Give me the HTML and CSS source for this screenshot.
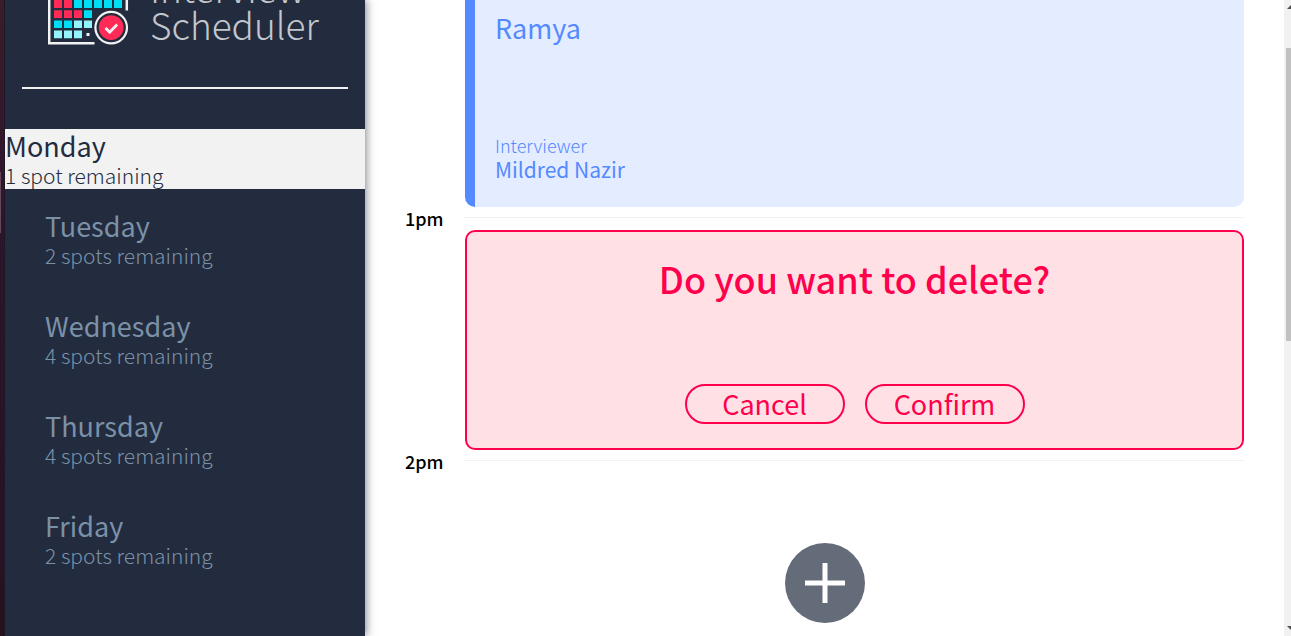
FILE: index.html
```html
<!DOCTYPE html>
<html lang="en">
<head>
<meta charset="utf-8">
<title>Interview Scheduler</title>
<link rel="stylesheet" href="styles.css">
</head>
<body>
<div class="desktop-edge"><div class="desktop-edge__glow"></div></div>
<section class="sidebar">
  <svg class="sidebar__logo" width="276" height="48" viewBox="0 0 276 48" role="img" aria-label="Interview Scheduler">
    <path d="M1.200 0V43.300H46.500M78.800 0V10.500" fill="none" stroke="#f2f2f2" stroke-width="2.500"/>
    <path d="M6 0h8v8H6zM16 0h8v8h-8zM6 10.300h8v7.700H6zM16 10.300h8v7.700h-8zM26 10.300h8v7.700h-8z" fill="#ff2b56"/>
    <path d="M26 0h8v8h-8zM36 0h8v8h-8zM46 0h8v8h-8zM56 0h8v8h-8zM66 0h8v8h-8zM36 10.300h8v7.700h-8zM6 20.400h8v7.700H6zM16 20.400h8v7.700h-8z" fill="#00def5"/>
    <path d="M26 20.400h8v7.700h-8zM36 20.400h8v7.700h-8zM6 30.600h8v7.700H6zM16 30.600h8v7.700h-8zM26 30.600h8v7.700h-8z" fill="#93f4fc"/>
    <path d="M38.500 33h3v3h-3z" fill="#f2f2f2"/>
    <circle cx="63.200" cy="27.600" r="15.800" fill="#222c3e" stroke="#f2f2f2" stroke-width="2.200"/>
    <circle cx="63.200" cy="27.600" r="12.400" fill="#ff2b56"/>
    <path d="M57.500 28l4.200 4.200 7.400-7.600" fill="none" stroke="#f2f2f2" stroke-width="2.800"/>
    <text class="sidebar__wordmark" x="102" y="3">Interview</text>
    <text class="sidebar__wordmark" x="102" y="40">Scheduler</text>
  </svg>
  <hr class="sidebar__separator">
  <nav>
    <ul class="day-list">
      <li><button class="day day--selected"><span class="day__name">Monday</span><span class="day__spots">1 spot remaining</span></button></li>
      <li><button class="day"><span class="day__name">Tuesday</span><span class="day__spots">2 spots remaining</span></button></li>
      <li><button class="day"><span class="day__name">Wednesday</span><span class="day__spots">4 spots remaining</span></button></li>
      <li><button class="day"><span class="day__name">Thursday</span><span class="day__spots">4 spots remaining</span></button></li>
      <li><button class="day"><span class="day__name">Friday</span><span class="day__spots">2 spots remaining</span></button></li>
    </ul>
  </nav>
</section>
<main class="schedule">
  <article class="card card--show">
    <h2 class="card__student">Ramya</h2>
    <div class="card__interviewer">
      <h4 class="card__label">Interviewer</h4>
      <h3 class="card__name">Mildred Nazir</h3>
    </div>
  </article>
  <header class="time"><h4 class="time__text">1pm</h4><hr class="time__line"></header>
  <article class="card card--confirm">
    <h1 class="card__question">Do you want to delete?</h1>
    <div class="card__actions">
      <button class="button">Cancel</button>
      <button class="button">Confirm</button>
    </div>
  </article>
  <header class="time"><h4 class="time__text">2pm</h4><hr class="time__line"></header>
  <div class="add">
    <button class="add__button" aria-label="Add">
      <svg width="80" height="80" viewBox="0 0 80 80"><circle cx="40" cy="40" r="40" fill="#646b79"/><path d="M40 20v40M20 40h40" stroke="#fff" stroke-width="5"/></svg>
    </button>
  </div>
</main>
<div class="scrollbar">
  <svg width="7" height="48" viewBox="0 0 7 48"><path d="M7 5L3 9h4z" fill="#505050"/></svg>
  <div class="scrollbar__thumb"></div>
  <div class="scrollbar__rest"></div>
  <svg width="7" height="12" viewBox="0 0 7 12"><path d="M3 2h4v4z" fill="#505050"/></svg>
</div>
</body>
</html>
```
FILE: styles.css
```css
* { box-sizing: border-box; margin: 0; padding: 0; }

body {
  display: flex;
  height: 100vh;
  overflow: hidden;
  background: #fff;
  font-family: "Noto Sans CJK SC", "Noto Sans", sans-serif;
  font-weight: 400;
}

button { font: inherit; cursor: pointer; }

.desktop-edge {
  flex: 0 0 5px;
  padding-top: 172px;
  background: linear-gradient(#3d1c2c, #2d142c 40%, #26121f);
  border-right: 1px solid #1c1420;
}
.desktop-edge__glow { width: 1px; height: 61px; background: #67485c; }

.sidebar {
  flex: 0 0 360px;
  background: #222c3e;
  box-shadow: 2px 0 8px rgba(34, 44, 62, 0.5);
  z-index: 1;
}
.sidebar__logo { display: block; margin-left: 43px; }
.sidebar__wordmark { font-size: 37px; font-weight: 300; fill: #c3c7cd; }
.sidebar__separator {
  margin: 39px 17px 40px;
  border: 0;
  border-top: 2px solid #f2f2f2;
}

.day-list { list-style: none; }
.day {
  display: block;
  width: 100%;
  padding: 20px 40px 22px;
  border: 0;
  background: transparent;
  color: #7b91a8;
  text-align: left;
}
.day--selected { padding: 0 0 2px; background: #f2f2f2; color: #222c3e; }
.day__name, .day__spots { display: block; }
.day__name { font-size: 27px; line-height: 34px; }
.day__spots { font-size: 21px; font-weight: 300; line-height: 24px; }

.schedule {
  flex: 1;
  min-width: 0;
  padding: 0 40px;
}

.card {
  display: flex;
  flex-direction: column;
  justify-content: space-between;
  margin-left: 60px;
  border-radius: 10px;
}
.card--show {
  height: 207px;
  padding: 10px 20px 26px;
  border-left: 10px solid #5489ff;
  border-top-left-radius: 0;
  border-top-right-radius: 0;
  background: #e4edff;
  color: #5489ff;
}
.card__student { font-size: 27px; font-weight: 400; line-height: 36px; }
.card__label { font-size: 18px; font-weight: 300; line-height: 24px; }
.card__name { font-size: 21px; font-weight: 400; line-height: 24px; }

.card--confirm {
  align-items: center;
  min-height: 220px;
  padding: 22px 20px 24px;
  border: 2px solid #ff004d;
  background: #ffe1e5;
  color: #ff004d;
}
.card__question { font-size: 36px; font-weight: 500; line-height: 48px; }
.card__actions { display: flex; gap: 20px; }
.button {
  width: 160px;
  height: 40px;
  border: 2px solid #ff004d;
  border-radius: 20px;
  background: transparent;
  color: #ff004d;
  font-size: 27px;
  line-height: 36px;
}

.time { display: flex; align-items: center; height: 23px; padding-bottom: 2px; }
.time__text { flex: 0 0 58px; font-size: 18px; font-weight: 500; line-height: 24px; }
.time__line { flex: 1; border: 0; border-top: 1px solid #f2f2f2; }

.add { display: flex; justify-content: center; padding-top: 70px; }
.add__button { border: 0; background: transparent; }
.add__button svg { display: block; }

.scrollbar {
  display: flex;
  flex-direction: column;
  flex: 0 0 7px;
  background: #f1f1f1;
}
.scrollbar__thumb { flex: 293; margin-left: 2px; background: #c1c1c1; }
.scrollbar__rest { flex: 283; }
```
